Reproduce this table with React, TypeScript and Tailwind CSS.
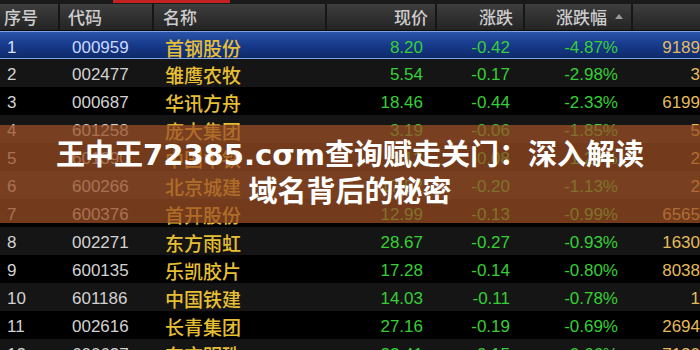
import React from 'react';

type Row = {
  no: number;
  code: string;
  name: string;
  price: string;
  change: string;
  pct: string;
  vol: string;
};

const rows: Row[] = [
  { no: 1, code: '000959', name: '首钢股份', price: '8.20', change: '-0.42', pct: '-4.87%', vol: '9189' },
  { no: 2, code: '002477', name: '雏鹰农牧', price: '5.54', change: '-0.17', pct: '-2.98%', vol: '3' },
  { no: 3, code: '000687', name: '华讯方舟', price: '18.46', change: '-0.44', pct: '-2.33%', vol: '6199' },
  { no: 4, code: '601258', name: '庞大集团', price: '3.19', change: '-0.06', pct: '-1.85%', vol: '5' },
  { no: 5, code: '601390', name: '中国中铁', price: '6.12', change: '-0.08', pct: '-1.29%', vol: '2' },
  { no: 6, code: '600266', name: '北京城建', price: '17.52', change: '-0.20', pct: '-1.13%', vol: '2' },
  { no: 7, code: '600376', name: '首开股份', price: '12.99', change: '-0.13', pct: '-0.99%', vol: '6565' },
  { no: 8, code: '002271', name: '东方雨虹', price: '28.67', change: '-0.27', pct: '-0.93%', vol: '1630' },
  { no: 9, code: '600135', name: '乐凯胶片', price: '17.28', change: '-0.14', pct: '-0.80%', vol: '8038' },
  { no: 10, code: '601186', name: '中国铁建', price: '14.03', change: '-0.11', pct: '-0.78%', vol: '1' },
  { no: 11, code: '002616', name: '长青集团', price: '27.16', change: '-0.19', pct: '-0.69%', vol: '2694' },
  { no: 12, code: '600637', name: '东方明珠', price: '22.41', change: '-0.15', pct: '-0.66%', vol: '7120' },
];

const cols = 'grid grid-cols-[60px_94px_173px_110px_88px_108px_1fr]';

const SortArrow = () => (
  <svg width="8" height="5" viewBox="0 0 8 5" className="mb-[2px]">
    <path d="M4 0 L8 5 L0 5 Z" fill="#9a9a9a" />
  </svg>
);

export default function App() {
  return (
    <div className="relative w-[700px] h-[350px] overflow-hidden bg-black font-['Liberation_Sans','Noto_Sans_CJK_SC',sans-serif]">
      {/* top strip */}
      <div className="h-[4px] bg-[#1a1a1a] flex">
        <div className="ml-[113px] w-[117px] h-[3px] bg-[#c42222]" />
      </div>

      {/* header */}
      <div
        className={`${cols} h-[27px] items-center bg-gradient-to-b from-[#3e3e3e] to-[#242424] border-b border-[#0a0a0a] text-[17px] font-medium text-[#cdcdcd] font-['Noto_Sans_CJK_SC',sans-serif]`}
      >
        <div className="pl-1 h-full flex items-center border-r-2 border-[#161616]">序号</div>
        <div className="pl-2 h-full flex items-center border-r-2 border-[#161616]">代码</div>
        <div className="pl-[9px] h-full flex items-center border-r-2 border-[#161616]">名称</div>
        <div className="pr-[7px] h-full flex items-center justify-end border-r-2 border-[#161616]">现价</div>
        <div className="pr-[10px] h-full flex items-center justify-end border-r-2 border-[#161616]">涨跌</div>
        <div className="pr-[8px] h-full flex items-center justify-end gap-[8px] border-r-2 border-[#161616]">
          涨跌幅 <SortArrow />
        </div>
        <div />
      </div>

      {/* rows */}
      {rows.map((r) => {
        const selected = r.no === 1;
        const rowBg = selected
          ? 'bg-gradient-to-b from-[#2a55aa] via-[#17398a] to-[#0e2a6a] border-y border-[#7fa2e6]'
          : r.no % 2 === 0
            ? 'bg-[#151515]'
            : 'bg-black';
        return (
          <div key={r.no} className={`${cols} h-[28px] items-center pt-[3px] text-[17px] ${rowBg}`}>
            <div className={`pl-[7px] ${selected ? 'text-[#d6e2ff]' : 'text-[#d2d2d2]'}`}>{r.no}</div>
            <div className={`pl-3 ${selected ? 'text-[#c9d9ff]' : 'text-[#d2d2d2]'}`}>{r.code}</div>
            <div className="pl-[11px] text-[19px] leading-none font-medium text-[#e6bf34] font-['Noto_Sans_CJK_SC',sans-serif]">
              {r.name}
            </div>
            <div className="pr-[14px] text-right text-[#36cf36]">{r.price}</div>
            <div className="pr-[15px] text-right text-[#36cf36]">{r.change}</div>
            <div className="pr-[15px] text-right text-[#36cf36]">{r.pct}</div>
            <div className="text-right text-[#e2bb5c] whitespace-nowrap">{r.vol}</div>
          </div>
        );
      })}

      {/* title banner */}
      <div className="absolute left-0 right-0 top-[125px] h-[98px] bg-[rgba(155,80,38,0.74)] flex items-center justify-center">
        <h1 className="text-center text-white font-bold text-[29px] leading-[37px] font-['DejaVu_Sans','Noto_Sans_CJK_SC',sans-serif]">
          王中王72385.cσm查询赋走关门：深入解读
          <br />
          域名背后的秘密
        </h1>
      </div>
    </div>
  );
}
